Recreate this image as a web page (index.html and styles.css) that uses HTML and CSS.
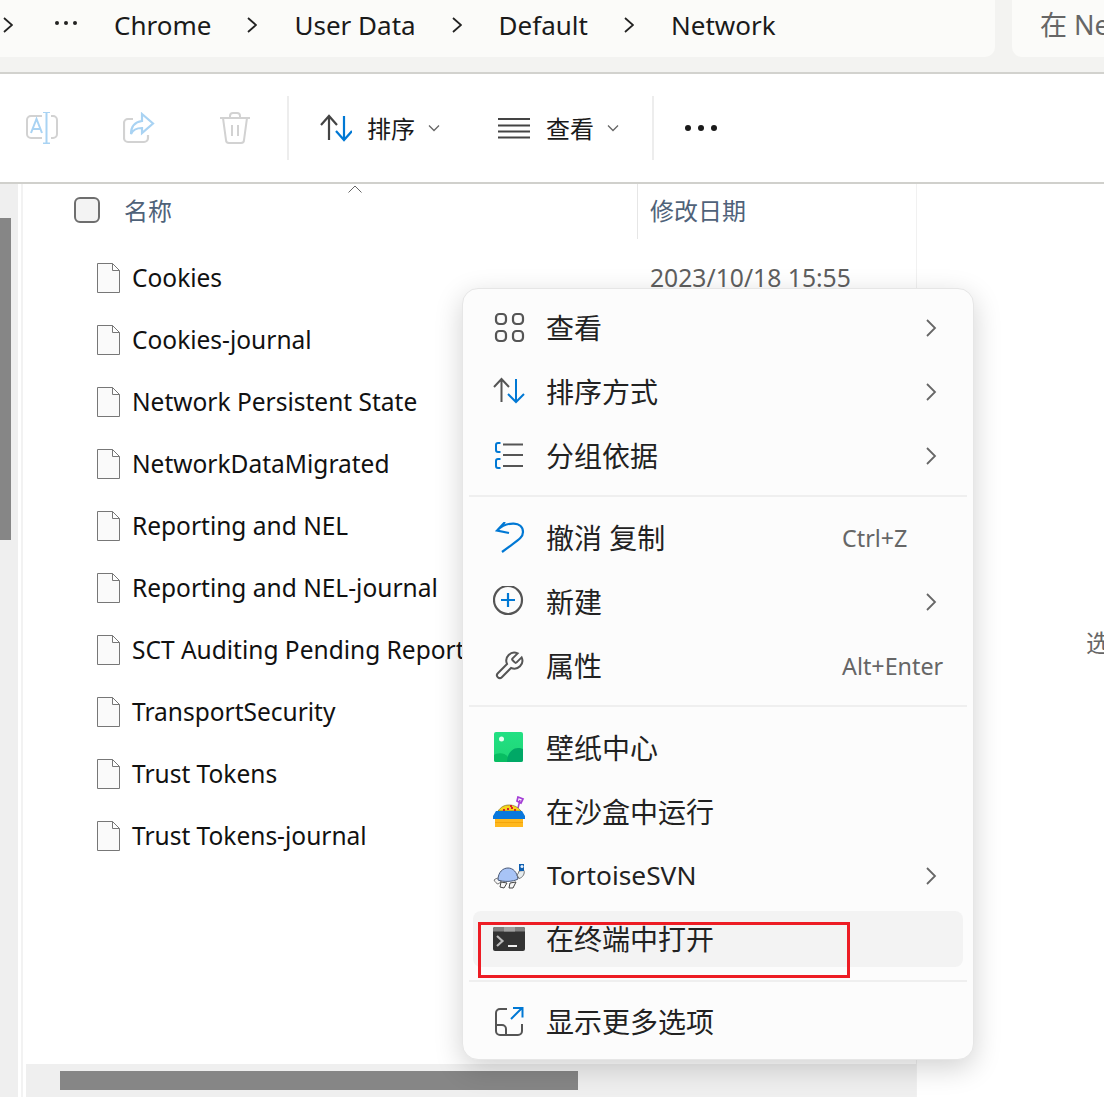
FILE: index.html
```html
<!DOCTYPE html>
<html lang="zh-CN">
  <head>
    <meta charset="UTF-8" />
    <title>Network</title>
    <link rel="stylesheet" href="styles.css">
  </head>
  <body>
    <div class="page">
      <header class="address-bar">
        <nav class="crumbs">
          <svg class="crumb-arrow first" viewBox="0 0 10 16"><path d="M1 1l8 7-8 7" /></svg>
          <span class="crumb-dots"><i></i><i></i><i></i></span>
          <span class="crumb">Chrome</span>
          <svg class="crumb-arrow" viewBox="0 0 10 16"><path d="M1 1l8 7-8 7" /></svg>
          <span class="crumb">User Data</span>
          <svg class="crumb-arrow" viewBox="0 0 10 16"><path d="M1 1l8 7-8 7" /></svg>
          <span class="crumb">Default</span>
          <svg class="crumb-arrow" viewBox="0 0 10 16"><path d="M1 1l8 7-8 7" /></svg>
          <span class="crumb">Network</span>
        </nav>
        <div class="search">在 Network 中搜索</div>
      </header>

      <section class="toolbar">
        <svg class="tool-icon" viewBox="0 0 32 32" fill="none" stroke-width="2">
          <path d="M16 4H5a4 4 0 0 0-4 4v14a4 4 0 0 0 4 4h11M25 4h2a4 4 0 0 1 4 4v14a4 4 0 0 1-4 4h-2" stroke="#d2d2d2" />
          <path d="M17 0h7M20.500 0v31.500M17 31.500h7M5 21l5.500-14L16 21M7 17h7" stroke="#a9d3f3" />
        </svg>
        <svg class="tool-icon" viewBox="0 0 32 32" fill="none" stroke-width="2.200">
          <path d="M10 7H5a4 4 0 0 0-4 4v15a4 4 0 0 0 4 4h16a4 4 0 0 0 4-4v-3" stroke="#d2d2d2" />
          <path d="M19 2l11 9.500L19 21v-5c-6 0-9 1.500-11 6 0-8 4-12 11-13z" stroke="#a9d3f3" />
        </svg>
        <svg class="tool-icon" viewBox="0 0 32 32" fill="none" stroke="#d2d2d2" stroke-width="2">
          <path d="M1 6h30M11 6V4a3 3 0 0 1 3-3h4a3 3 0 0 1 3 3v2M4 6l3 22a3 3 0 0 0 3 3h12a3 3 0 0 0 3-3l3-22M13 13v11M19 13v11" />
        </svg>
        <span class="tool-sep"></span>
        <svg class="tool-icon sort-icon" viewBox="0 0 32 32" fill="none" stroke-width="2.200">
          <path d="M1 13l8-9 8 9M9 4v24" stroke="#444" />
          <path d="M24 4v24M16 19l8 9 8-9" stroke="#0078d4" />
        </svg>
        <span class="tool-label">排序</span>
        <svg class="caret" viewBox="0 0 12 8"><path d="M1 1.500l5 5 5-5" /></svg>
        <svg class="tool-icon list-icon" viewBox="0 0 32 32" fill="none" stroke="#444" stroke-width="2">
          <path d="M0 7h32M0 13.500h32M0 19.500h32M0 25.500h32" />
        </svg>
        <span class="tool-label">查看</span>
        <svg class="caret" viewBox="0 0 12 8"><path d="M1 1.500l5 5 5-5" /></svg>
        <span class="tool-sep sep-right"></span>
        <span class="tool-more"><i></i><i></i><i></i></span>
      </section>

      <main class="content">
        <div class="side-scroll"><div class="side-thumb"></div></div>
        <section class="list">
          <div class="list-head">
            <div class="col-name">
              <span class="checkbox"></span>
              <span>名称</span>
              <svg class="sort-caret" viewBox="0 0 14 8"><path d="M0.500 7.500L7 1l6.500 6.500" /></svg>
            </div>
            <div class="col-date">修改日期</div>
          </div>
          <div class="rows">
            <div class="row">
              <div class="file">
                <svg class="file-icon" viewBox="0 0 23 30"><path d="M.5.5h15l7 7v22H.5zM15.500.5v7h7" /></svg>
                <span>Cookies</span>
              </div>
              <div class="date">2023/10/18 15:55</div>
            </div>
            <div class="row">
              <div class="file">
                <svg class="file-icon" viewBox="0 0 23 30"><path d="M.5.5h15l7 7v22H.5zM15.500.5v7h7" /></svg>
                <span>Cookies-journal</span>
              </div>
            </div>
            <div class="row">
              <div class="file">
                <svg class="file-icon" viewBox="0 0 23 30"><path d="M.5.5h15l7 7v22H.5zM15.500.5v7h7" /></svg>
                <span>Network Persistent State</span>
              </div>
            </div>
            <div class="row">
              <div class="file">
                <svg class="file-icon" viewBox="0 0 23 30"><path d="M.5.5h15l7 7v22H.5zM15.500.5v7h7" /></svg>
                <span>NetworkDataMigrated</span>
              </div>
            </div>
            <div class="row">
              <div class="file">
                <svg class="file-icon" viewBox="0 0 23 30"><path d="M.5.5h15l7 7v22H.5zM15.500.5v7h7" /></svg>
                <span>Reporting and NEL</span>
              </div>
            </div>
            <div class="row">
              <div class="file">
                <svg class="file-icon" viewBox="0 0 23 30"><path d="M.5.5h15l7 7v22H.5zM15.500.5v7h7" /></svg>
                <span>Reporting and NEL-journal</span>
              </div>
            </div>
            <div class="row">
              <div class="file">
                <svg class="file-icon" viewBox="0 0 23 30"><path d="M.5.5h15l7 7v22H.5zM15.500.5v7h7" /></svg>
                <span>SCT Auditing Pending Reports</span>
              </div>
            </div>
            <div class="row">
              <div class="file">
                <svg class="file-icon" viewBox="0 0 23 30"><path d="M.5.5h15l7 7v22H.5zM15.500.5v7h7" /></svg>
                <span>TransportSecurity</span>
              </div>
            </div>
            <div class="row">
              <div class="file">
                <svg class="file-icon" viewBox="0 0 23 30"><path d="M.5.5h15l7 7v22H.5zM15.500.5v7h7" /></svg>
                <span>Trust Tokens</span>
              </div>
            </div>
            <div class="row">
              <div class="file">
                <svg class="file-icon" viewBox="0 0 23 30"><path d="M.5.5h15l7 7v22H.5zM15.500.5v7h7" /></svg>
                <span>Trust Tokens-journal</span>
              </div>
            </div>
          </div>
          <div class="h-scroll"><div class="h-thumb"></div></div>
        </section>
        <aside class="preview">选择要预览的文件</aside>
      </main>

      <!-- context menu -->
      <div class="menu">
        <div class="menu-item">
          <svg class="menu-icon" viewBox="0 0 32 32" fill="none" stroke="#555" stroke-width="2.200">
            <rect x="3" y="2" width="10" height="10" rx="3.500" /><rect x="20" y="2" width="10" height="10" rx="3.500" />
            <rect x="3" y="19" width="10" height="10" rx="3.500" /><rect x="20" y="19" width="10" height="10" rx="3.500" />
          </svg>
          <span class="menu-text">查看</span>
          <svg class="menu-arrow" viewBox="0 0 12 18"><path d="M2 1l8 8-8 8" /></svg>
        </div>
        <div class="menu-item">
          <svg class="menu-icon" viewBox="0 0 32 32" fill="none" stroke-width="2">
            <path d="M1 11l7.500-8 7.500 8M8.500 3v23" stroke="#555" />
            <path d="M23 3v23M15 18l8 8 8-8" stroke="#0078d4" />
          </svg>
          <span class="menu-text">排序方式</span>
          <svg class="menu-arrow" viewBox="0 0 12 18"><path d="M2 1l8 8-8 8" /></svg>
        </div>
        <div class="menu-item">
          <svg class="menu-icon" viewBox="0 0 32 32" fill="none" stroke-width="2">
            <path d="M7.500 3H5a2 2 0 0 0-2 2v5a2 2 0 0 0 2 2h2.500M7.500 19H5a2 2 0 0 0-2 2v5a2 2 0 0 0 2 2h2.500" stroke="#0078d4" />
            <path d="M10 4.500h20M10 15h20M10 26h20" stroke="#555" />
          </svg>
          <span class="menu-text">分组依据</span>
          <svg class="menu-arrow" viewBox="0 0 12 18"><path d="M2 1l8 8-8 8" /></svg>
        </div>
        <div class="menu-sep"></div>
        <div class="menu-item">
          <svg class="menu-icon" viewBox="0 0 32 32" fill="none" stroke="#0078d4" stroke-width="2.200">
            <path d="M12 0L4 8.500l12 2.500M4 8.500C14-1 30-1 30 10c0 6-5 8-21 20" />
          </svg>
          <span class="menu-text">撤消 复制</span>
          <span class="shortcut">Ctrl+Z</span>
        </div>
        <div class="menu-item">
          <svg class="menu-icon" viewBox="0 0 32 32" fill="none" stroke-width="2.200">
            <circle cx="15" cy="14" r="14" stroke="#555" />
            <path d="M15 7v14M8 14h14" stroke="#0078d4" />
          </svg>
          <span class="menu-text">新建</span>
          <svg class="menu-arrow" viewBox="0 0 12 18"><path d="M2 1l8 8-8 8" /></svg>
        </div>
        <div class="menu-item">
          <svg class="menu-icon" viewBox="0 0 24 24" fill="none" stroke="#555" stroke-width="1.500">
            <path d="M14.700 6.300a1 1 0 0 0 0 1.400l1.600 1.600a1 1 0 0 0 1.400 0l3.770-3.770a6 6 0 0 1-7.940 7.940l-6.910 6.910a2.120 2.120 0 0 1-3-3l6.910-6.910a6 6 0 0 1 7.940-7.940l-3.760 3.760z" />
          </svg>
          <span class="menu-text">属性</span>
          <span class="shortcut">Alt+Enter</span>
        </div>
        <div class="menu-sep"></div>
        <div class="menu-item">
          <svg class="menu-icon" viewBox="0 0 32 32">
            <defs>
              <linearGradient id="wall" x1="0" y1="0" x2="0" y2="1">
                <stop offset="0" stop-color="#22e083" /><stop offset="1" stop-color="#1fd676" />
              </linearGradient>
            </defs>
            <rect x="1" y="0" width="29" height="30" rx="2" fill="url(#wall)" />
            <circle cx="8.500" cy="7" r="2.500" fill="#e8fff2" />
            <path d="M1 28v-5c3-2 10-3 14 2 1 2 1 4 1 5H3a2 2 0 0 1-2-2z" fill="#08bd62" />
            <path d="M14 30c0-8 5-14 11-14 2 0 4 .5 5 1v11a2 2 0 0 1-2 2z" fill="#00a866" />
          </svg>
          <span class="menu-text">壁纸中心</span>
        </div>
        <div class="menu-item">
          <svg class="menu-icon" viewBox="0 0 32 32">
            <path d="M25 12l2-8" stroke="#a43fd6" stroke-width="1.500" />
            <path d="M25 1l5 2-2 4-4-2z" fill="none" stroke="#a43fd6" stroke-width="1.700" />
            <path d="M5 15c3-4 6-6 11-6s9 2 12 6z" fill="#f7d31c" stroke="#6b5a10" stroke-width=".6" />
            <path d="M10 13h2v2h-2zM14 12h2v2h-2zM18 11h2v2h-2zM21 13h2v2h-2zM17 9h2v2h-2z" fill="#d8232a" />
            <path d="M3 15h26l3 5v3H0v-3z" fill="#0a78dc" />
            <rect x="2" y="23" width="28" height="8" fill="#ffb81e" />
            <rect x="2" y="26" width="28" height="1" fill="#f3a50c" />
          </svg>
          <span class="menu-text">在沙盒中运行</span>
        </div>
        <div class="menu-item">
          <svg class="menu-icon" viewBox="0 0 32 32">
            <path d="M1 20c1-1 3-2 5-2l2 4-3 2c-1 0-3-2-4-4z" fill="#f4f4f4" stroke="#555" stroke-width=".8" />
            <path d="M5 20c0-8 5-12 10-12 5 0 9 4 10 11-5 3-15 3-20 1z" fill="#a8c4f6" stroke="#4a5a78" stroke-width="1" />
            <path d="M24 15c1-1 2-3 2-4l5-.5c1 3-1 7-5 8z" fill="#e6ecef" stroke="#555" stroke-width=".8" />
            <path d="M26 4h5v7h-5z" fill="#0f5fb0" />
            <circle cx="29" cy="6.500" r="1.500" fill="#e8f2ff" />
            <path d="M8 22l-1 5 4 1 3-5zM17 23l-1 5 4 0 3-6z" fill="#f6f6f6" stroke="#444" stroke-width="1" />
          </svg>
          <span class="menu-text latin">TortoiseSVN</span>
          <svg class="menu-arrow" viewBox="0 0 12 18"><path d="M2 1l8 8-8 8" /></svg>
        </div>
        <div class="menu-item active">
          <svg class="menu-icon" viewBox="0 0 32 32">
            <rect x="0" y="4" width="32" height="24" rx="2" fill="#333" />
            <path d="M2 4h28a2 2 0 0 1 2 2v2.500H0V6a2 2 0 0 1 2-2z" fill="#7f7f7f" />
            <path d="M11 4h11v4.500H11z" fill="#a0a0a0" />
            <path d="M4 13l5.500 5L4 23" fill="none" stroke="#bbb" stroke-width="2.200" />
            <path d="M15 23h9" stroke="#eee" stroke-width="2" />
          </svg>
          <span class="menu-text">在终端中打开</span>
        </div>
        <div class="menu-sep"></div>
        <div class="menu-item">
          <svg class="menu-icon" viewBox="0 0 32 32" fill="none" stroke-width="2">
            <path d="M14 3H7a4 4 0 0 0-4 4v18a4 4 0 0 0 4 4h18a4 4 0 0 0 4-4v-7M3 19h6a4 4 0 0 1 4 4v6" stroke="#555" />
            <path d="M18 13L29 2M20 2h9.500v9.500" stroke="#0078d4" />
          </svg>
          <span class="menu-text">显示更多选项</span>
        </div>
      </div>

      <!-- red annotation -->
      <div class="mark"></div>
    </div>
  </body>
</html>
```

FILE: styles.css
```css
* {
  box-sizing: border-box;
}
body {
  margin: 0;
  background-color: white;
  font-family: "Noto Sans", "Noto Sans CJK SC", sans-serif;
  color: #1a1a1a;
}
.page {
  position: relative;
  width: 1104px;
  height: 1110px;
  overflow: hidden;
}

/* address bar */
.address-bar {
  display: flex;
  height: 74px;
  background-color: #f3f3f1;
  border-bottom: 2px solid #d2d2ce;
  padding-bottom: 15px;
}
.crumbs {
  display: flex;
  align-items: center;
  width: 995px;
  padding-bottom: 7px;
  background-color: #fbfbf9;
  border-radius: 0 0 10px 0;
  font-size: 26px;
}
.crumb-arrow {
  width: 10px;
  height: 16px;
  margin: 0 37px 0 36px;
  fill: none;
  stroke: #222;
  stroke-width: 1.800;
  flex: none;
}
.crumb-arrow.first {
  margin: 0 0 0 3px;
}
.crumb-dots {
  display: flex;
  gap: 5px;
  margin: -4px 37px 0 42px;
}
.crumb-dots i {
  width: 4px;
  height: 4px;
  border-radius: 50%;
  background-color: #222;
}
.crumb {
  white-space: nowrap;
}
.search {
  flex: 1;
  margin-left: 17px;
  padding-left: 28px;
  background-color: #fbfbf9;
  border-radius: 0 0 0 10px;
  color: #666;
  font-size: 27px;
  line-height: 50px;
  white-space: nowrap;
  overflow: hidden;
}

/* toolbar */
.toolbar {
  display: flex;
  align-items: center;
  height: 110px;
  padding-left: 26px;
  border-bottom: 2px solid #d0d0cc;
}
.tool-icon {
  width: 32px;
  height: 32px;
  margin-right: 65px;
  flex: none;
}
.tool-icon:nth-child(2) {
  margin-right: 64px;
}
.tool-icon:nth-child(3) {
  margin-right: 36px;
}
.tool-sep {
  width: 2px;
  height: 64px;
  background-color: #ededed;
  margin-right: 31px;
}
.sort-icon {
  margin-right: 15px;
}
.list-icon {
  margin-right: 16px;
}
.tool-label {
  padding-bottom: 2px;
  font-size: 24px;
}
.caret {
  width: 12px;
  height: 8px;
  margin-left: 13px;
  margin-right: 58px;
  fill: none;
  stroke: #666;
  stroke-width: 1.300;
}
.caret:has(+ .sep-right) {
  margin-right: 33px;
}
.tool-more {
  display: flex;
  gap: 7px;
}
.tool-more i {
  width: 6px;
  height: 6px;
  border-radius: 50%;
  background-color: #1a1a1a;
}

/* file list */
.content {
  display: flex;
  height: 913px;
}
.side-scroll {
  width: 18px;
  background-color: #efefef;
  flex: none;
}
.side-thumb {
  width: 11px;
  height: 322px;
  margin-top: 34px;
  background-color: #868686;
}
.list {
  display: flex;
  flex-direction: column;
  width: 896px;
  margin-left: 3px;
  border-left: 2px solid #f2f2f2;
  border-right: 1px solid #f1f1f1;
  flex: none;
}
.list-head {
  display: flex;
  height: 55px;
  font-size: 24px;
  color: #4f6279;
}
.col-name {
  position: relative;
  display: flex;
  align-items: center;
  gap: 24px;
  width: 614px;
  padding: 0 0 4px 51px;
}
.checkbox {
  width: 26px;
  height: 26px;
  border: 2px solid #6e6e6e;
  border-radius: 6px;
  background-color: #f3f3f3;
}
.sort-caret {
  position: absolute;
  left: 325px;
  top: 1px;
  width: 14px;
  height: 8px;
  fill: none;
  stroke: #666;
  stroke-width: 1;
}
.col-date {
  display: flex;
  align-items: center;
  flex: 1;
  padding: 0 0 4px 12px;
  border-left: 1px solid #e6e6e6;
}
.rows {
  flex: 1;
  padding-top: 8px;
}
.row {
  display: flex;
  align-items: center;
  height: 62px;
  font-size: 24.500px;
}
.file {
  display: flex;
  align-items: center;
  gap: 12px;
  width: 614px;
  padding-left: 74px;
  color: #111;
  white-space: nowrap;
}
.file span {
  padding-bottom: 2px;
}
.file-icon {
  width: 23px;
  height: 30px;
  fill: #fafafa;
  stroke: #777;
  stroke-width: 1;
  flex: none;
}
.date {
  padding: 0 0 2px 13px;
  font-size: 24.700px;
  color: #5f5f5f;
  white-space: nowrap;
}
.h-scroll {
  height: 33px;
  margin-left: 3px;
  padding-top: 7px;
  background-color: #efefef;
}
.h-thumb {
  width: 518px;
  height: 19px;
  margin-left: 34px;
  background-color: #868686;
}
.preview {
  flex: 1;
  padding: 440px 0 0 169px;
  font-size: 24px;
  color: #666;
  white-space: nowrap;
  overflow: hidden;
}

/* context menu */
.menu {
  position: absolute;
  left: 462px;
  top: 288px;
  width: 512px;
  height: 772px;
  padding: 11px 6px 0;
  background-color: #fcfcfc;
  border: 1px solid #e6e6e6;
  border-radius: 16px;
  box-shadow: 0 8px 28px rgba(0, 0, 0, 0.18);
}
.menu-item {
  display: flex;
  align-items: center;
  height: 56px;
  margin: 0 4px 8px;
  padding-left: 20px;
  border-radius: 8px;
}
.menu-item.active {
  background-color: #f3f3f3;
  margin-top: -1px;
  margin-bottom: 0;
}
.menu-icon {
  width: 32px;
  height: 32px;
  margin-right: 21px;
  flex: none;
}
.menu-text {
  flex: 1;
  padding-bottom: 2px;
  font-size: 28px;
  color: #222;
  white-space: nowrap;
}
.menu-text.latin {
  margin-left: 1px;
  font-size: 26.300px;
}
.menu-arrow {
  width: 12px;
  height: 18px;
  margin-right: 26px;
  fill: none;
  stroke: #666;
  stroke-width: 1.800;
}
.shortcut {
  width: 121px;
  font-size: 23.300px;
  color: #666;
}
/* the item's 8px bottom margin collapses into these */
.menu-sep {
  height: 2px;
  margin: 11px 0 13px;
  background-color: #efefef;
}
.menu-item.active + .menu-sep {
  margin-top: 13px;
  margin-bottom: 12px;
}
.mark {
  position: absolute;
  left: 478px;
  top: 922px;
  width: 372px;
  height: 56px;
  border: 3px solid #ed1c24;
}
```
